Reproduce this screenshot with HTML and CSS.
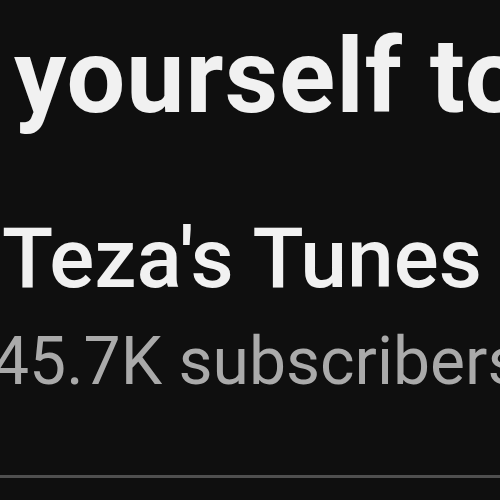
FILE: index.html
```html
<!DOCTYPE html>
<html lang="en">
<head>
  <meta charset="UTF-8" />
  <meta name="viewport" content="width=device-width, initial-scale=1" />
  <title>Teza's Tunes</title>
  <link rel="stylesheet" href="styles.css">
</head>
<body>
  <div class="page">
    <h1 class="video-title">yourself to</h1>
    <div class="channel">
      <div class="channel-name">Teza's Tunes</div>
      <div class="channel-subs">45.7K subscribers</div>
    </div>
    <div class="divider"></div>
  </div>
</body>
</html>
```

FILE: styles.css
```css
body {
  margin: 0;
  background: #0f0f0f;
  font-family: Roboto, "Liberation Sans", Arial, sans-serif;
  overflow: hidden;
}
.page {
  width: 500px;
  height: 500px;
  overflow: hidden;
  white-space: nowrap;
}
.video-title {
  margin: 0;
  padding: 17px 0 0 14px;
  font-size: 104px;
  font-weight: 700;
  line-height: 120px;
  letter-spacing: 1px;
  color: #f1f1f1;
}
.channel {
  padding-top: 77px;
}
.channel-name {
  padding-left: 2px;
  font-size: 84px;
  font-weight: 500;
  line-height: 90px;
  color: #f1f1f1;
}
.channel-subs {
  margin: 23px 0 0 -8px;
  font-size: 66px;
  line-height: 70px;
  color: #aaaaaa;
}
.divider {
  margin-top: 78px;
  height: 3px;
  background: #4f4f4f;
}
```
